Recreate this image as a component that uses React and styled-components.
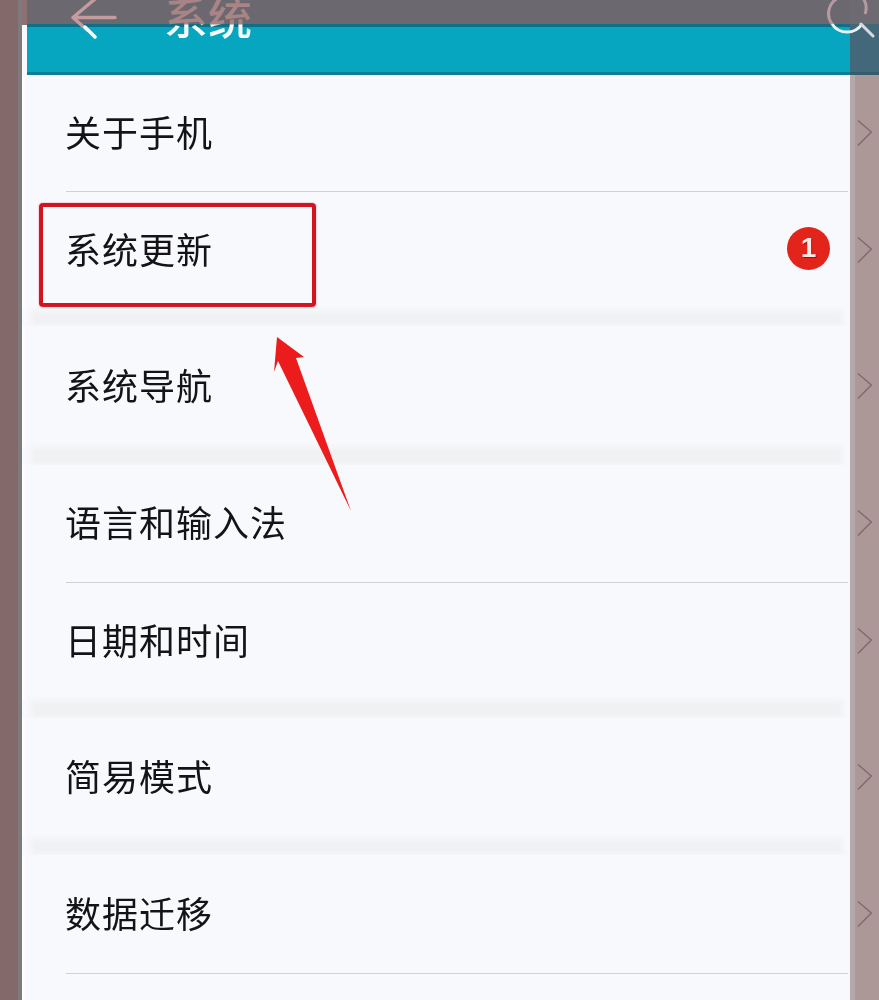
import React from "react";
import styled, { createGlobalStyle } from "styled-components";

const Global = createGlobalStyle`
  html, body { margin: 0; padding: 0; background: #83696a; }
  * { box-sizing: border-box; }
`;

const Page = styled.div`
  position: relative;
  width: 879px;
  height: 1000px;
  overflow: hidden;
  background: linear-gradient(to right, #83696a 0 18px, #7f7a7c 18px 22px, #ad9898 22px);
  padding-left: 22px;
  font-family: "Noto Sans CJK SC", "Noto Sans", sans-serif;
`;

const Header = styled.header`
  display: flex;
  height: 75px;
  background: linear-gradient(#8d7071 0 25px, #f8f9fd 25px);
`;

const HeaderMain = styled.div`
  flex: 1;
  margin-left: 5px;
  display: flex;
  align-items: flex-start;
  background: linear-gradient(#6b686f 0 24px, #0e6f86 24px 27px, #07a6c0 27px 72px, #0b7f95 72px 75px);
`;

const HeaderEnd = styled.div`
  width: 29px;
  background: linear-gradient(#6e6a72 0 24px, #42687a 24px 72px, #335d6e 72px 75px);
`;

const BackIcon = styled.svg`
  width: 50px;
  height: 50px;
  margin-left: 40px;
  flex: none;
  filter: blur(0.5px);
`;

const Title = styled.h1`
  margin: -13px 0 0 47px;
  font-size: 44px;
  line-height: 58px;
  font-weight: 500;
  letter-spacing: 0;
  background: linear-gradient(#a98486 0 37px, #f3fbfc 38px);
  -webkit-background-clip: text;
  background-clip: text;
  color: transparent;
  filter: blur(0.6px);
`;

const SearchIcon = styled.svg`
  position: absolute;
  left: 825px;
  top: 0;
  width: 54px;
  height: 42px;
  filter: blur(0.5px);
`;

const Row = styled.div`
  display: flex;
  height: ${(p) => p.$h}px;
`;

const RowMain = styled.div`
  flex: 1;
  display: flex;
  align-items: center;
  padding-left: 44px;
  background: #f8f9fd;
  border-left: 3px solid #fdfdff;
  position: relative;
`;

const Label = styled.span`
  font-size: 36px;
  line-height: 48px;
  letter-spacing: 1px;
  color: #141418;
  margin-left: -4px;
  position: relative;
  top: -3px;
  filter: blur(0.4px);
`;

const Divider = styled.div`
  position: absolute;
  left: 41px;
  right: 2px;
  bottom: 0;
  height: 1px;
  background: #cfd3d6;
`;

const Badge = styled.span`
  margin-left: auto;
  margin-right: 20px;
  margin-bottom: 6px;
  width: 43px;
  height: 43px;
  border-radius: 50%;
  background: #e2241b;
  color: #fbe9e6;
  font-family: "Liberation Sans", sans-serif;
  font-weight: 700;
  font-size: 28px;
  display: flex;
  align-items: center;
  justify-content: center;
  text-shadow: 1px 1px 0 #8f1512;
  filter: blur(0.4px);
`;

const Highlight = styled.div`
  position: absolute;
  left: 14px;
  top: 11px;
  width: 277px;
  height: 104px;
  border: 4px solid #d3131f;
  border-radius: 4px;
  box-shadow: 0 0 2px rgba(220, 40, 50, 0.5);
`;

const ChevronCell = styled.div`
  width: 29px;
  flex: none;
  display: flex;
  align-items: center;
  border-left: 5px solid #b4a9aa;
`;

const Chevron = styled.svg`
  width: 24px;
  height: 30px;
  margin-bottom: 2px;
  margin-left: 1px;
`;

const Band = styled.div`
  display: flex;
  height: ${(p) => p.$h}px;
  background: #f8f9fd;
  margin-right: 29px;
  padding: 0 7px 0 9px;
  position: relative;
  &::before {
    content: "";
    flex: 1;
    background: #f0f1f3;
    filter: blur(2px);
  }
  &::after {
    content: "";
    position: absolute;
    left: 100%;
    top: 0;
    bottom: 0;
    width: 29px;
    background: linear-gradient(to right, #b4a9aa 0 5px, #ad9898 5px);
  }
`;

const ArrowIcon = styled.svg`
  position: absolute;
  left: 265px;
  top: 330px;
  width: 95px;
  height: 190px;
`;

const items = [
  { type: "row", label: "关于手机", h: 117, divider: true },
  { type: "row", label: "系统更新", h: 118, badge: 1, highlight: true },
  { type: "band", h: 16 },
  { type: "row", label: "系统导航", h: 121 },
  { type: "band", h: 18 },
  { type: "row", label: "语言和输入法", h: 118, divider: true },
  { type: "row", label: "日期和时间", h: 117 },
  { type: "band", h: 18 },
  { type: "row", label: "简易模式", h: 120 },
  { type: "band", h: 17 },
  { type: "row", label: "数据迁移", h: 119, divider: true },
  { type: "row", label: "", h: 60, noChevron: true },
];

export default function App() {
  return (
    <Page>
      <Global />
      <Header>
        <HeaderMain>
          <BackIcon viewBox="0 0 50 50">
            <path
              d="M28 -1 L6 17.5 L20 30 M6 17.5 H48"
              fill="none"
              stroke="#c29c9e"
              strokeWidth="3.5"
              strokeLinecap="round"
              strokeLinejoin="round"
            />
            <path d="M18 27 L28 37" fill="none" stroke="#f2fbfc" strokeWidth="3.5" strokeLinecap="round" />
          </BackIcon>
          <Title>系统</Title>
        </HeaderMain>
        <HeaderEnd />
      </Header>
      <SearchIcon viewBox="0 0 54 42">
        <path d="M7 24 A17.5 17.5 0 0 1 13 -2 M38 -2 A17.5 17.5 0 0 1 40 14" fill="none" stroke="#b79aa0" strokeWidth="3" />
        <path d="M7 24 A18 18 0 0 0 37 24" fill="none" stroke="#e4f3f6" strokeWidth="3" />
        <path d="M36 24 L48 36" fill="none" stroke="#d5dbdf" strokeWidth="3" strokeLinecap="round" />
      </SearchIcon>
      {items.map((it, i) =>
        it.type === "band" ? (
          <Band key={i} $h={it.h} />
        ) : (
          <Row key={i} $h={it.h}>
            <RowMain>
              <Label>{it.label}</Label>
              {it.badge && <Badge>{it.badge}</Badge>}
              {it.divider && <Divider />}
              {it.highlight && <Highlight />}
            </RowMain>
            <ChevronCell>
              {!it.noChevron && (
                <Chevron viewBox="0 0 24 30">
                  <path d="M2 2 L16 14 L2 28" fill="none" stroke="#85696e" strokeWidth="1.6" />
                </Chevron>
              )}
            </ChevronCell>
          </Row>
        )
      )}
      <ArrowIcon viewBox="265 330 95 190">
        <path
          d="M277 337 L304 357 L296 358 L351 511 L278 361 L274 372 Z"
          fill="#ec1c1c"
        />
      </ArrowIcon>
    </Page>
  );
}
